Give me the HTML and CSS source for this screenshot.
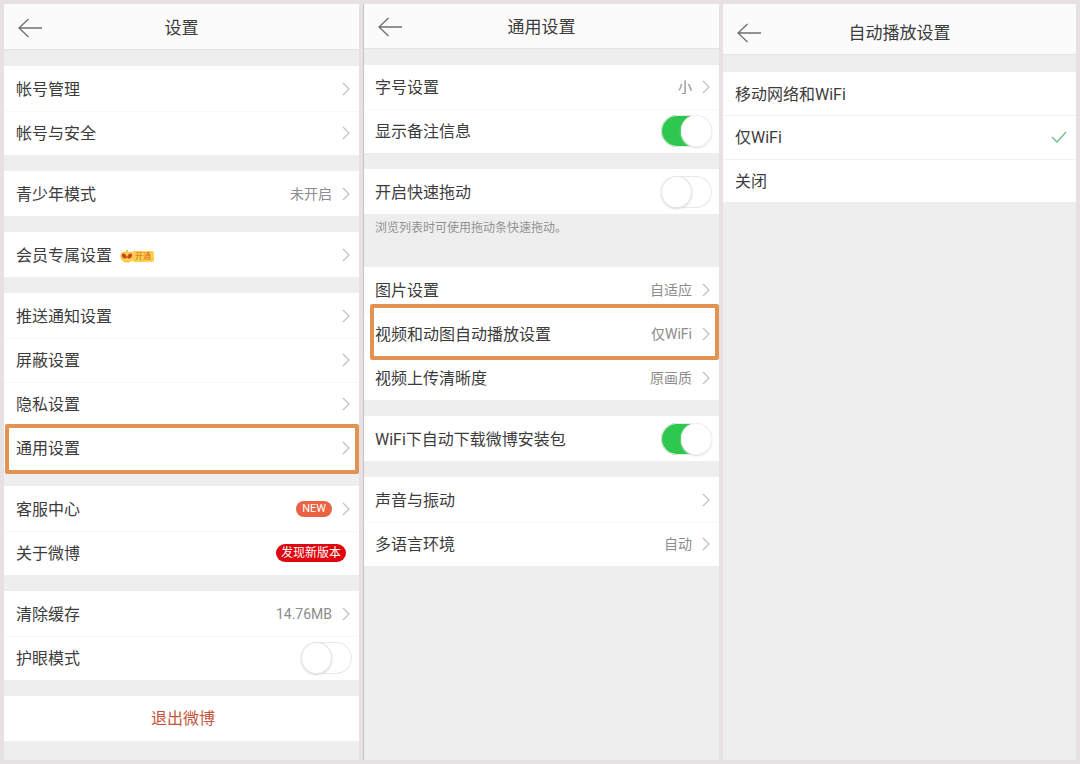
FILE: index.html
```html
<!DOCTYPE html>
<html lang="zh-CN">
<head>
<meta charset="utf-8">
<meta name="viewport" content="width=device-width, initial-scale=1">
<title>设置</title>
<link rel="stylesheet" href="styles.css">
</head>
<body>
<svg class="defs" aria-hidden="true">
  <symbol id="arrow" viewBox="0 0 24 20"><path d="M10.5 1 1 10l9.500 9M1 10h23"/></symbol>
  <symbol id="chevron" viewBox="0 0 8 14"><path d="M1 1l6 6-6 6"/></symbol>
</svg>
<main class="board">
  <section class="panel">
    <header class="bar">
      <button class="back" type="button" aria-label="返回"><svg><use href="#arrow"/></svg></button>
      <h1 class="title">设置</h1>
    </header>
    <div class="group">
      <button class="row" type="button"><span class="label">帐号管理</span><svg class="chev"><use href="#chevron"/></svg></button>
      <button class="row" type="button"><span class="label">帐号与安全</span><svg class="chev"><use href="#chevron"/></svg></button>
    </div>
    <div class="group">
      <button class="row" type="button"><span class="label">青少年模式</span><span class="value">未开启</span><svg class="chev"><use href="#chevron"/></svg></button>
    </div>
    <div class="group">
      <button class="row" type="button"><span class="label">会员专属设置
        <span class="vip"><svg class="vip-mark" viewBox="0 0 15 15"><path d="M7.500 1 9 4c3-1 5 0 5 3 0 4-2 7-6.500 7S1 11 1 7c0-3 2-4 5-3z" fill="#fbd24c" stroke="#efb73a"/><path d="M7.500 9C6 4 2 4 2 6.500c0 2.500 1.500 3.500 3.500 4zM7.500 9C9 4 13 4 13 6.500c0 2.500-1.500 3.500-3.500 4z" fill="#d0441f"/></svg><span class="vip-text">开通</span></span></span><svg class="chev"><use href="#chevron"/></svg></button>
    </div>
    <div class="group">
      <button class="row" type="button"><span class="label">推送通知设置</span><svg class="chev"><use href="#chevron"/></svg></button>
      <button class="row" type="button"><span class="label">屏蔽设置</span><svg class="chev"><use href="#chevron"/></svg></button>
      <button class="row" type="button"><span class="label">隐私设置</span><svg class="chev"><use href="#chevron"/></svg></button>
      <button class="row marked marked-general" type="button"><span class="label">通用设置</span><svg class="chev"><use href="#chevron"/></svg></button>
    </div>
    <div class="group">
      <button class="row" type="button"><span class="label">客服中心</span><span class="badge badge-new">NEW</span><svg class="chev"><use href="#chevron"/></svg></button>
      <button class="row" type="button"><span class="label">关于微博</span><span class="badge badge-version">发现新版本</span></button>
    </div>
    <div class="group">
      <button class="row" type="button"><span class="label">清除缓存</span><span class="value">14.76MB</span><svg class="chev"><use href="#chevron"/></svg></button>
      <label class="row"><span class="label">护眼模式</span><input class="switch" type="checkbox"></label>
    </div>
    <div class="group">
      <button class="row logout" type="button">退出微博</button>
    </div>
  </section>

  <section class="panel panel-lined">
    <header class="bar bar-short">
      <button class="back" type="button" aria-label="返回"><svg><use href="#arrow"/></svg></button>
      <h1 class="title">通用设置</h1>
    </header>
    <div class="group group-tight">
      <button class="row" type="button"><span class="label">字号设置</span><span class="value">小</span><svg class="chev"><use href="#chevron"/></svg></button>
      <label class="row"><span class="label">显示备注信息</span><input class="switch" type="checkbox" checked></label>
    </div>
    <div class="group">
      <label class="row"><span class="label">开启快速拖动</span><input class="switch" type="checkbox"></label>
    </div>
    <p class="note">浏览列表时可使用拖动条快速拖动。</p>
    <div class="group group-after-note">
      <button class="row" type="button"><span class="label">图片设置</span><span class="value">自适应</span><svg class="chev"><use href="#chevron"/></svg></button>
      <button class="row marked marked-video" type="button"><span class="label">视频和动图自动播放设置</span><span class="value">仅WiFi</span><svg class="chev"><use href="#chevron"/></svg></button>
      <button class="row" type="button"><span class="label">视频上传清晰度</span><span class="value">原画质</span><svg class="chev"><use href="#chevron"/></svg></button>
    </div>
    <div class="group">
      <label class="row"><span class="label">WiFi下自动下载微博安装包</span><input class="switch" type="checkbox" checked></label>
    </div>
    <div class="group">
      <button class="row" type="button"><span class="label">声音与振动</span><svg class="chev"><use href="#chevron"/></svg></button>
      <button class="row" type="button"><span class="label">多语言环境</span><span class="value">自动</span><svg class="chev"><use href="#chevron"/></svg></button>
    </div>
  </section>

  <section class="panel">
    <header class="bar bar-tall">
      <button class="back" type="button" aria-label="返回"><svg><use href="#arrow"/></svg></button>
      <h1 class="title">自动播放设置</h1>
    </header>
    <div class="group group-tight group-choices">
      <label class="row"><span class="label">移动网络和WiFi</span><input class="choice" type="radio" name="autoplay"><svg class="tick" viewBox="0 0 16 12"><path d="M1 6l5 5 9-10"/></svg></label>
      <label class="row"><span class="label">仅WiFi</span><input class="choice" type="radio" name="autoplay" checked><svg class="tick" viewBox="0 0 16 12"><path d="M1 6l5 5 9-10"/></svg></label>
      <label class="row"><span class="label">关闭</span><input class="choice" type="radio" name="autoplay"><svg class="tick" viewBox="0 0 16 12"><path d="M1 6l5 5 9-10"/></svg></label>
    </div>
  </section>
</main>
</body>
</html>
```
FILE: styles.css
```css
* {
  box-sizing: border-box;
}

body {
  margin: 0;
  background: #e6e2e3;
  color: #3c3c3c;
  font-family: Roboto, "Noto Sans CJK SC", sans-serif;
  font-size: 16px;
  line-height: 24px;
}

button {
  margin: 0;
  border: 0;
  padding: 0;
  background: none;
  color: inherit;
  font: inherit;
  text-align: left;
  cursor: pointer;
}

.defs {
  display: none;
}

.board {
  display: grid;
  grid-template-columns: 355fr 356fr 353fr;
  gap: 4px;
  min-height: 100vh;
  padding: 4px;
}

.panel {
  background: #eee;
}

.panel-lined {
  border-left: 1px solid #c6c4c4;
}

.bar {
  display: grid;
  grid-template-columns: 40px 1fr 40px;
  align-items: center;
  height: 46px;
  padding-top: 2px;
  border-bottom: 1px solid #e4e4e4;
  background: #fbfbfb;
}

.bar-short {
  height: 45px;
}

.bar-tall {
  height: 51px;
  padding-top: 8px;
}

.back {
  height: 32px;
  padding-left: 14px;
}

.back svg {
  display: block;
  width: 24px;
  height: 20px;
  fill: none;
  stroke: #707070;
  stroke-width: 1.3;
}

.title {
  margin: 0;
  font-size: 17px;
  font-weight: 400;
  text-align: center;
}

.group {
  margin-top: 16px;
  padding-top: 1px;
  background: #fff;
}

.group-tight {
  padding-top: 0;
}

.row {
  position: relative;
  display: flex;
  align-items: center;
  width: 100%;
  height: 44px;
  padding: 0 9px 0 12px;
}

.panel-lined .row {
  padding-left: 11px;
}

.row + .row {
  box-shadow: inset 0 1px #f8f8f8;
}

.label {
  display: flex;
  flex: 1;
  align-items: center;
  gap: 8px;
  padding-top: 2px;
}

.value {
  color: #8c8c8c;
  font-size: 14px;
}

.chev {
  width: 8px;
  height: 14px;
  margin-left: 10px;
  fill: none;
  stroke: #c0c0c0;
  stroke-width: 1.2;
}

.marked::after {
  content: "";
  position: absolute;
  z-index: 1;
  border: 4px solid #e39351;
  border-radius: 2px;
}

.marked-general::after {
  inset: -2px 0 -4px 1px;
}

.marked-video::after {
  inset: -8px 0 -4px 6px;
}

.badge {
  border-radius: 9px;
  color: #fff;
}

.badge-new {
  padding: 0 6px;
  background: #ea6242;
  font-size: 11px;
  line-height: 16px;
}

.badge-version {
  margin-right: 4px;
  padding: 0 5px;
  background: #e0060d;
  font-size: 12px;
  line-height: 18px;
}

.vip {
  display: flex;
  align-items: center;
}

.vip-mark {
  width: 14px;
  height: 14px;
}

.vip-text {
  margin-left: -2px;
  padding: 0 3px;
  border-radius: 2px;
  background: #fbd050;
  color: #dd6a1c;
  font-size: 8px;
  line-height: 11px;
}

.switch {
  width: 51px;
  height: 32px;
  margin: 0 -2px 0 0;
  border-radius: 16px;
  appearance: none;
  background: #fff;
  box-shadow: inset 0 0 0 1px #e8e8e8;
}

.switch::before {
  content: "";
  display: block;
  width: 31px;
  height: 32px;
  border-radius: 16px;
  background: #fff;
  box-shadow: inset 0 0 0 1px #e2e2e2, 0 1px 2px #d8d8d8;
}

.switch:checked {
  background: #2dc84d;
}

.switch:checked::before {
  margin-left: 20px;
  box-shadow: inset 0 0 0 1px #f0f0f0, 0 1px 2px #ddd;
}

.logout {
  justify-content: center;
  color: #c4543a;
}

.note {
  margin: 0;
  padding: 4px 11px 0;
  color: #929292;
  font-size: 12px;
  line-height: 20px;
}

.group-after-note {
  margin-top: 29px;
}

.group-choices {
  margin-top: 17px;
}

.group-choices .row:first-child,
.group-choices .row:last-child {
  height: 43px;
}

.group-choices .row + .row {
  box-shadow: inset 0 1px #f1f1f1;
}

.choice {
  width: 0;
  height: 0;
  margin: 0;
  appearance: none;
}

.tick {
  width: 16px;
  height: 12px;
  fill: none;
  stroke: #72c48a;
  stroke-width: 1.5;
  visibility: hidden;
}

.choice:checked + .tick {
  visibility: visible;
}
```
